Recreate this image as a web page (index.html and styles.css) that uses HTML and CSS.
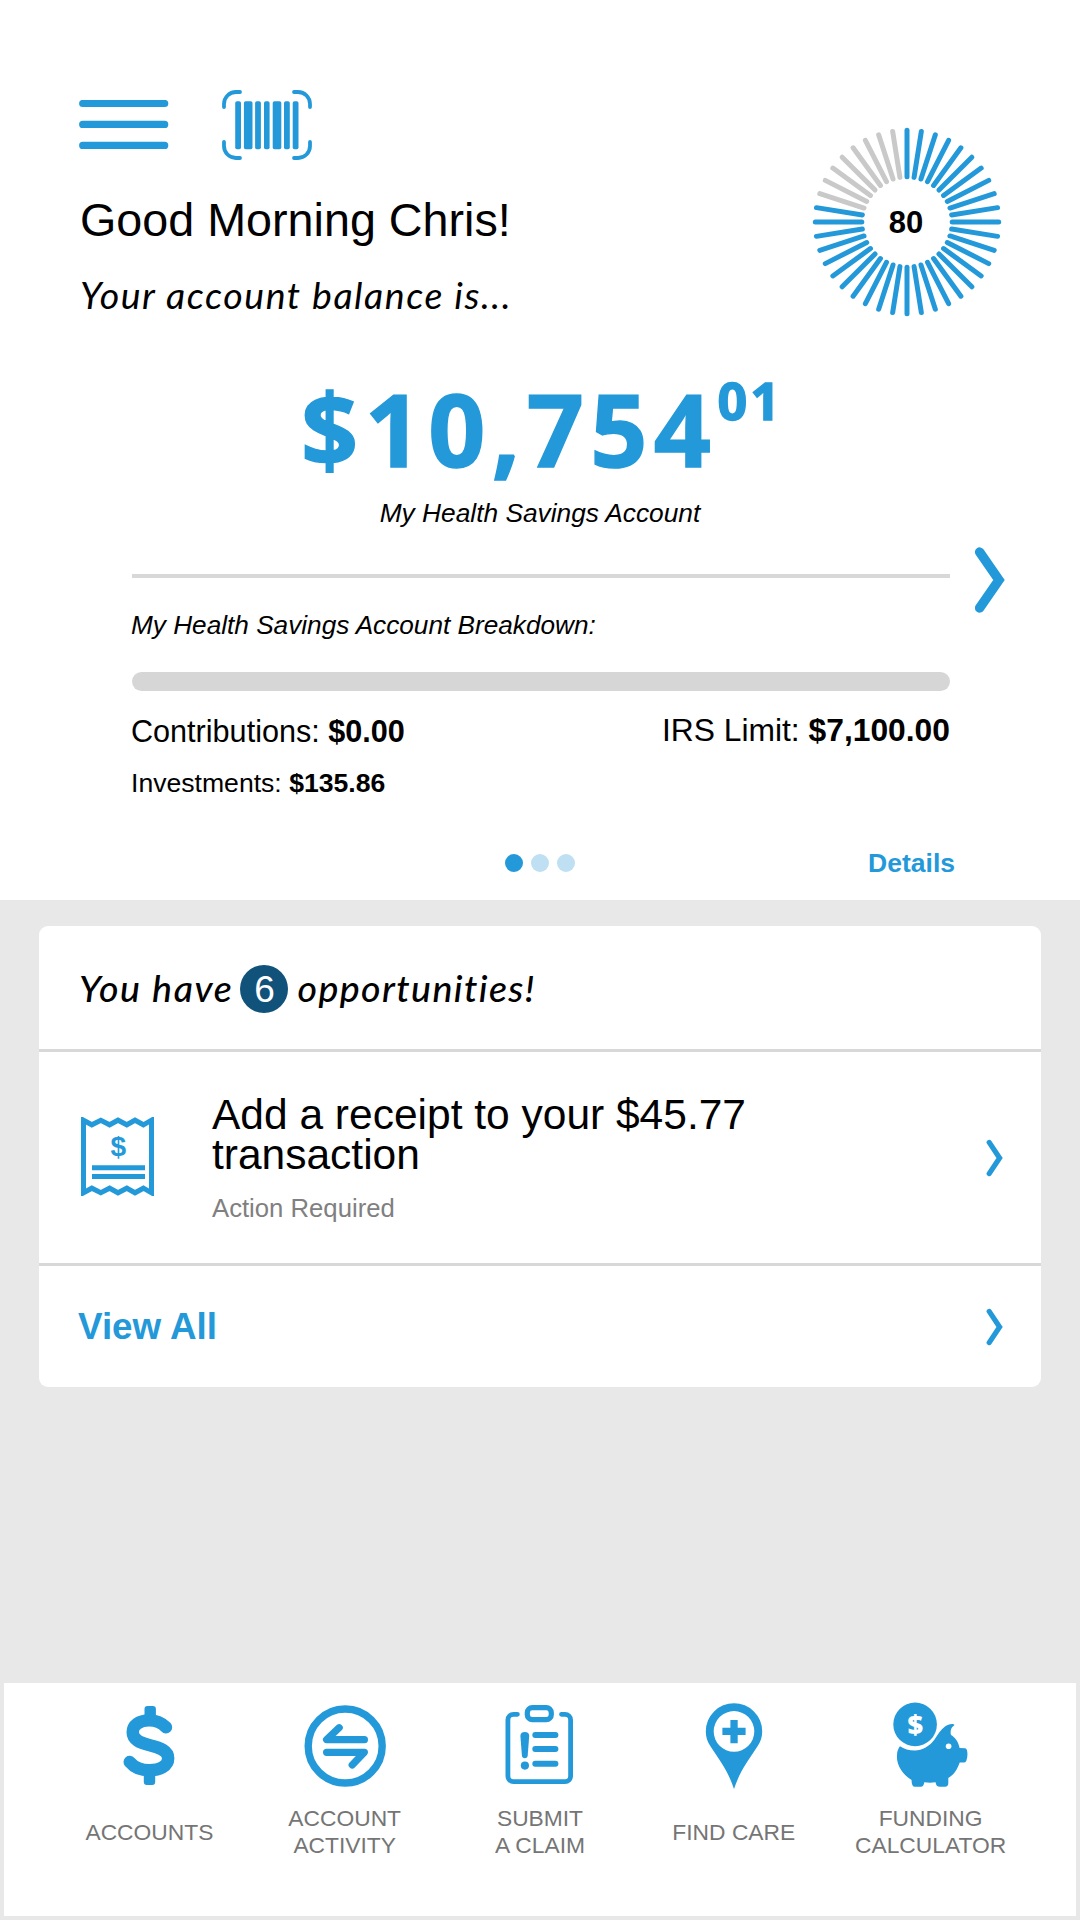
FILE: index.html
```html
<!DOCTYPE html>
<html lang="en">
<head>
  <meta charset="utf-8">
  <title>Health Savings Account</title>
  <link rel="stylesheet" href="styles.css">
</head>
<body>
<div class="account">
  <header class="header">
    <div class="header-left">
      <div class="header-icons">
        <svg class="menu-icon" width="90" height="50" viewBox="0 0 90 50">
          <path d="M3.7 3.5H85.7M3.7 24.4H85.7M3.7 45.4H85.7"/>
        </svg>
        <svg class="barcode-icon" width="90" height="70" viewBox="0 0 90 70">
          <path class="corner" d="M2 17V14A12 12 0 0 1 14 2H18M72 2H76A12 12 0 0 1 88 14V17M88 52V56A12 12 0 0 1 76 68H72M18 68H14A12 12 0 0 1 2 56V52"/>
          <rect x="13.2" y="11.2" width="5.8" height="48" rx="1.8"/>
          <rect x="21.9" y="11.2" width="8.6" height="48" rx="1.8"/>
          <rect x="33.1" y="11.2" width="5.8" height="48" rx="1.8"/>
          <rect x="42" y="11.2" width="5.6" height="48" rx="1.8"/>
          <rect x="50.7" y="11.2" width="8.6" height="48" rx="1.8"/>
          <rect x="62" y="11.2" width="5.8" height="48" rx="1.8"/>
          <rect x="70.7" y="11.2" width="5.8" height="48" rx="1.8"/>
        </svg>
      </div>
      <h1 class="greeting">Good Morning Chris!</h1>
      <p class="subtitle">Your account balance is...</p>
    </div>
    <svg class="gauge" width="192" height="192" viewBox="-96 -96 192 192">
      <g id="gauge-ticks"></g>
      <text x="-1" y="11.2" text-anchor="middle">80</text>
    </svg>
  </header>

  <div class="balance">
    <span class="dollars">$10,754</span><span class="cents">01</span>
  </div>
  <p class="caption">My Health Savings Account</p>

  <div class="breakdown-row">
    <div class="breakdown">
      <div class="rule"></div>
      <p class="breakdown-title">My Health Savings Account Breakdown:</p>
      <div class="progress"></div>
      <div class="amounts">
        <span class="contributions">Contributions: <b>$0.00</b></span>
        <span class="limit">IRS Limit: <b>$7,100.00</b></span>
      </div>
      <p class="investments">Investments: <b>$135.86</b></p>
    </div>
    <svg class="next" width="30" height="66" viewBox="0 0 30 66">
      <path d="M4.6 5L24 33L4.6 61"/>
    </svg>
  </div>

  <div class="pager">
    <div class="dots">
      <span class="dot active"></span>
      <span class="dot"></span>
      <span class="dot"></span>
    </div>
    <a class="details">Details</a>
  </div>
</div>

<div class="card">
  <div class="card-head">
    <span>You have</span>
    <span class="badge">6</span>
    <span class="opps">opportunities!</span>
  </div>
  <div class="card-item">
    <svg class="receipt" width="73" height="79" viewBox="0 0 73 79">
      <path d="M2.5 3.2L10.8 7.8L19.8 3.2L28.6 7.8L37 3.2L45.8 7.8L54 3.2L62.4 7.8L70.5 3.2V75.8L62.4 71.2L54 75.8L45.8 71.2L37 75.8L28.6 71.2L19.8 75.8L10.8 71.2L2.5 75.8Z"/>
      <path d="M11 50.8H64M11 59.4H64"/>
      <text x="37.3" y="38.8" text-anchor="middle">$</text>
    </svg>
    <div class="item-text">
      <h2>Add a receipt to your $45.77<br>transaction</h2>
      <p>Action Required</p>
    </div>
    <svg class="arrow" width="17" height="38" viewBox="0 0 17 38">
      <path d="M3.2 3.4L13.6 19L3.2 34.6"/>
    </svg>
  </div>
  <div class="card-foot">
    <a>View All</a>
    <svg class="arrow" width="17" height="38" viewBox="0 0 17 38">
      <path d="M3.2 3.4L13.6 19L3.2 34.6"/>
    </svg>
  </div>
</div>

<nav class="tabs">
  <div class="tab">
    <svg width="90" height="90" viewBox="0 0 90 90">
      <path class="line" stroke-width="12.4" d="M62 26.3C58 22 52 19.4 45 19.4C35 19.4 28.7 24.5 28.7 31.3C28.7 39 36 41.8 45.8 44.3C57 47 64.2 50 64.2 57.3C64.2 65 56 69.3 45.3 69.3C36 69.3 29.5 65.5 25.7 61"/>
      <rect x="40.5" y="5" width="11.4" height="16" rx="3"/>
      <rect x="39.8" y="68" width="11.4" height="16" rx="3"/>
    </svg>
    <span>ACCOUNTS</span>
  </div>
  <div class="tab">
    <svg width="90" height="90" viewBox="0 0 90 90">
      <circle class="line" stroke-width="7.4" cx="45.2" cy="45" r="37"/>
      <path class="line" stroke-width="7.2" d="M39.2 26.7L26.6 38.7H64.4M26.6 51.3H64.4L52.2 64"/>
    </svg>
    <span>ACCOUNT<br>ACTIVITY</span>
  </div>
  <div class="tab">
    <svg width="90" height="90" viewBox="0 0 90 90">
      <path class="line" stroke-width="4.8" d="M22.4 13.3H18.5A5.6 5.6 0 0 0 12.9 18.9V75A5.6 5.6 0 0 0 18.5 80.6H70A5.6 5.6 0 0 0 75.6 75V18.9A5.6 5.6 0 0 0 70 13.3H66.5"/>
      <rect class="line" stroke-width="5.2" x="32.3" y="6.7" width="24" height="12" rx="5"/>
      <path d="M25.4 35Q25.4 31 29.8 31T34.2 35L32.7 54.5Q32.4 57.3 29.8 57.3T26.9 54.5Z"/>
      <circle cx="29.9" cy="64.6" r="4.1"/>
      <path class="line" stroke-width="6" d="M40.3 34H60.4M40.3 48H60.4M40.3 62.7H60.4"/>
    </svg>
    <span>SUBMIT<br>A CLAIM</span>
  </div>
  <div class="tab find-care">
    <svg width="90" height="90" viewBox="0 0 90 90">
      <path fill-rule="evenodd" d="M45 2.2A28.2 28.2 0 0 1 73.2 30.4C73.2 36 71.5 40.5 69 44.5C58 61.5 51 70 45 88C39 70 32 61.5 21 44.5C18.5 40.5 16.8 36 16.8 30.4A28.2 28.2 0 0 1 45 2.2ZM45 10.1A20.3 20.3 0 1 0 45 50.7A20.3 20.3 0 1 0 45 10.1Z"/>
      <path d="M41.4 18.9H48.7V26.7H56.6V34.1H48.7V42.3H41.4V34.1H33.4V26.7H41.4Z"/>
    </svg>
    <span>FIND CARE</span>
  </div>
  <div class="tab">
    <svg width="90" height="90" viewBox="0 0 90 90">
      <circle cx="29.1" cy="23.4" r="21.8"/>
      <path d="M13.9 45.2C18 48 23 49.5 28.9 49.5C36 49.5 44 45 48.5 38.5C52 33 54.5 28.8 59 25.4C61.5 23.6 65 22.6 67.5 23.2C68.7 23.5 68.5 24.8 67.5 25.1C65 26.5 64 30.5 65 34C68.5 36 72.5 40.5 73.6 47L79 47.2Q80.4 47.3 80.9 49C81.8 52 81.6 56 80.4 59.4Q79.7 61.6 77.5 61.6H73.7C71.5 68 68.5 73.5 62.3 77V82Q62.3 85.8 59 85.8H54Q50 85.8 49.6 81.3Q44 82 38.3 81.3Q37.5 85.8 35 85.8H29Q25.4 85.8 25.6 79C16.5 73 10.9 65 10.9 55.5Q10.9 49 13.9 45.2Z"/>
      <circle class="hole" cx="62.6" cy="45.3" r="2.8"/>
      <text class="hole" x="29.3" y="33" text-anchor="middle">$</text>
    </svg>
    <span>FUNDING<br>CALCULATOR</span>
  </div>
</nav>

<script>
// 40 ticks, one for every 2.5%
const value = 80;
const ticks = document.getElementById('gauge-ticks');
for (let i = 0; i < 40; i++) {
  const line = document.createElementNS('http://www.w3.org/2000/svg', 'line');
  line.setAttribute('y1', -45.2);
  line.setAttribute('y2', -91.7);
  line.setAttribute('transform', `rotate(${i * 9})`);
  if (i >= value / 2.5) {
    line.classList.add('off');
  }
  ticks.appendChild(line);
}
</script>
</body>
</html>
```
FILE: styles.css
```css
* {
  box-sizing: border-box;
}
body {
  margin: 0;
  height: 1920px;
  display: flex;
  flex-direction: column;
  background: #e8e8e8;
  color: #000;
  font-family: "Liberation Sans", Arial, sans-serif;
}
h1, h2, p {
  margin: 0;
  font-weight: normal;
}
svg {
  display: block;
  flex: none;
  fill: #2499d9;
}

/* account summary */
.account {
  height: 900px;
  background: #fff;
}
.header {
  display: flex;
  justify-content: space-between;
  padding: 90px 77px 0 79px;
}
.header-icons {
  display: flex;
  align-items: flex-start;
  gap: 53px;
}
.menu-icon {
  margin-top: 10px;
  stroke: #2499d9;
  stroke-width: 7.2;
  stroke-linecap: round;
}
.barcode-icon .corner {
  fill: none;
  stroke: #2499d9;
  stroke-width: 3.8;
  stroke-linecap: round;
}
.greeting {
  margin: 32px 0 0 1px;
  font-size: 46.7px;
  line-height: 56px;
}
.subtitle {
  margin: 25px 0 0 1px;
  font-family: Lato, sans-serif;
  font-style: italic;
  font-size: 37.5px;
  line-height: 44px;
  letter-spacing: 1.55px;
}
.gauge {
  margin-top: 35.5px;
}
.gauge line {
  stroke: #2499d9;
  stroke-width: 5;
  stroke-linecap: round;
}
.gauge line.off {
  stroke: #c9c9c9;
}
.gauge text {
  fill: #000;
  font-size: 31px;
  font-weight: bold;
}
.balance {
  display: flex;
  justify-content: center;
  align-items: flex-start;
  margin-top: 60px;
  padding-left: 4px;
  height: 100px;
  color: #2499d9;
  font-family: "Open Sans", sans-serif;
  font-weight: 700;
  -webkit-text-stroke: 1.4px #2499d9;
}
.dollars {
  font-size: 100px;
  line-height: 100px;
  letter-spacing: 6.4px;
}
.cents {
  margin-top: -4px;
  font-size: 52px;
  line-height: 52px;
  letter-spacing: 3px;
}
.caption {
  margin-top: 19px;
  font-size: 26.3px;
  line-height: 32px;
  font-style: italic;
  text-align: center;
}
.breakdown-row {
  display: flex;
  margin-left: 131px;
}
.breakdown {
  width: 819px;
}
.rule {
  margin: 45px 0 0 1px;
  height: 4px;
  background: #d8d8d8;
}
.breakdown-title {
  margin-top: 31px;
  font-size: 26.2px;
  line-height: 32px;
  font-style: italic;
}
.progress {
  margin: 31px 0 0 1px;
  height: 19px;
  border-radius: 10px;
  background: #d6d6d6;
}
.amounts {
  display: flex;
  justify-content: space-between;
  margin-top: 21px;
  line-height: 36px;
}
.contributions {
  margin-top: 1px;
  font-size: 30.6px;
}
.limit {
  font-size: 31.8px;
}
.investments {
  margin-top: 18px;
  font-size: 26.6px;
  line-height: 32px;
}
.next {
  margin: 18px 0 0 25px;
  fill: none;
  stroke: #2499d9;
  stroke-width: 9.4;
  stroke-linecap: round;
}
.pager {
  display: grid;
  grid-template-columns: 1fr auto 1fr;
  align-items: center;
  margin-top: 48px;
  padding: 0 125px;
  line-height: 32px;
}
.dots {
  grid-column: 2;
  display: flex;
  gap: 8px;
}
.dot {
  width: 18px;
  height: 18px;
  border-radius: 50%;
  background: #bfdff3;
}
.dot.active {
  background: #2499d9;
}
.details {
  justify-self: end;
  color: #2499d9;
  font-size: 26.5px;
  font-weight: bold;
}

/* opportunities */
.card {
  margin: 26px 39px 0;
  height: 461px;
  border-radius: 9px;
  background: #fff;
}
.card-head,
.card-item,
.card-foot {
  display: flex;
  align-items: center;
  padding: 0 38px 0 42px;
}
.card-head {
  height: 126px;
  padding-left: 40px;
  border-bottom: 3px solid #d8d8d8;
  font-family: Lato, sans-serif;
  font-style: italic;
  font-weight: 500;
  font-size: 37.5px;
  letter-spacing: 1.65px;
}
.badge {
  width: 48px;
  height: 48px;
  margin: 3px 9px 0 7px;
  border-radius: 50%;
  background: #11527a;
  color: #fff;
  font: 37px/49px "Liberation Sans", sans-serif;
  letter-spacing: 0;
  text-align: center;
}
.opps {
  letter-spacing: 1.4px;
}
.card-item {
  height: 214px;
  border-bottom: 3px solid #d8d8d8;
}
.receipt path {
  fill: none;
  stroke: #2499d9;
  stroke-width: 5;
}
.receipt {
  margin-top: -2px;
}
.receipt text {
  font-size: 28px;
  font-weight: bold;
}
.item-text {
  margin: 4px auto 0 58px;
}
.item-text h2 {
  font-size: 42.5px;
  line-height: 40px;
}
.item-text p {
  margin-top: 17px;
  color: #808080;
  font-size: 25.7px;
  line-height: 32px;
}
.arrow {
  fill: none;
  stroke: #2499d9;
  stroke-width: 5.2;
  stroke-linecap: round;
}
.card-foot {
  justify-content: space-between;
  height: 121px;
  padding-left: 39px;
  color: #2499d9;
  font-size: 36.8px;
  font-weight: bold;
}

/* bottom navigation */
.tabs {
  display: grid;
  grid-template-columns: repeat(5, 195.3px);
  justify-content: center;
  align-content: start;
  height: 233px;
  margin: auto 4px 4px;
  padding-top: 18px;
  background: #fff;
}
.tab {
  display: flex;
  flex-direction: column;
  align-items: center;
}
.find-care {
  padding-right: 3px;
}
.tab .line {
  fill: none;
  stroke: #2499d9;
  stroke-linecap: round;
  stroke-linejoin: round;
}
.tab .hole {
  fill: #fff;
}
.tab text {
  font-family: "Open Sans", sans-serif;
  font-size: 27px;
  font-weight: 800;
}
.tab span {
  display: flex;
  align-items: center;
  height: 54px;
  margin-top: 14px;
  color: #757575;
  font-size: 22.8px;
  line-height: 27px;
  text-align: center;
}
```
